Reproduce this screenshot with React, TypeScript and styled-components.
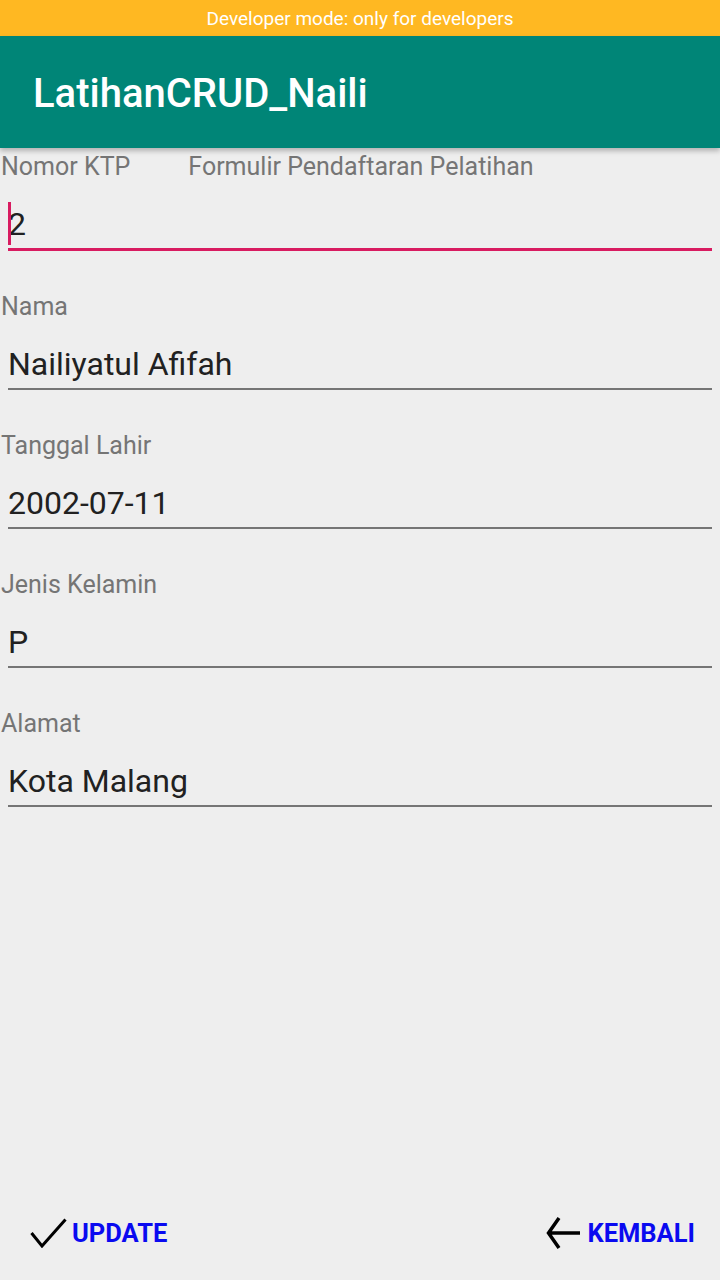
import React from "react";
import styled, { createGlobalStyle } from "styled-components";

const Global = createGlobalStyle`
  html, body { margin: 0; padding: 0; background: #eeeeee; }
  body { font-family: Roboto, "Noto Sans", sans-serif; }
  * { box-sizing: border-box; }
`;

const Screen = styled.div`
  width: 720px;
  height: 1280px;
  display: flex;
  flex-direction: column;
  background: #eeeeee;
  overflow: hidden;
`;

const StatusBar = styled.div`
  height: 36px;
  background: #ffb822;
  color: #ffffff;
  font-size: 19px;
  display: flex;
  align-items: center;
  justify-content: center;
`;

const AppBar = styled.header`
  height: 112px;
  background: #008577;
  color: #ffffff;
  display: flex;
  align-items: center;
  padding-left: 33px;
  padding-top: 2px;
  font-size: 40px;
  font-weight: 500;
  box-shadow: 0 3px 5px rgba(0, 0, 0, 0.25);
  position: relative;
  z-index: 1;
`;

const Form = styled.main`
  display: flex;
  flex-direction: column;
  gap: 37px;
`;

const Field = styled.div`
  display: flex;
  flex-direction: column;
`;

const LabelRow = styled.div`
  height: 36px;
  display: flex;
  align-items: center;
  gap: 58px;
  padding-left: 1px;
`;

const Label = styled.span`
  font-size: 25px;
  color: #757575;
`;

const InputBox = styled.div<{ $focused?: boolean }>`
  margin: 21px 8px 0;
  height: ${(p) => (p.$focused ? "46px" : "45px")};
  border-bottom: ${(p) => (p.$focused ? "3px solid #d81b60" : "2px solid #757575")};
  display: flex;
  align-items: flex-start;
  font-size: 32px;
  line-height: 38px;
  color: #212121;
  position: relative;
`;

const Cursor = styled.span`
  position: absolute;
  left: 0;
  top: -3px;
  width: 3px;
  height: 43px;
  background: #d81b60;
`;

const Footer = styled.footer`
  margin-top: auto;
  height: 94px;
  display: flex;
  justify-content: space-between;
  align-items: center;
  padding: 0 25px 0 30px;
`;

const ActionButton = styled.button<{ $gap: number }>`
  display: flex;
  align-items: center;
  gap: ${(p) => p.$gap}px;
  background: none;
  border: none;
  padding: 0;
  font-family: Roboto, sans-serif;
  font-weight: 700;
  font-size: 25.5px;
  color: #0a0af0;
`;

const fields = [
  { label: "Nama", value: "Nailiyatul Afifah" },
  { label: "Tanggal Lahir", value: "2002-07-11" },
  { label: "Jenis Kelamin", value: "P" },
  { label: "Alamat", value: "Kota Malang" },
];

export default function App() {
  return (
    <>
      <Global />
      <Screen>
        <StatusBar>Developer mode: only for developers</StatusBar>
        <AppBar>LatihanCRUD_Naili</AppBar>
        <Form>
          <Field>
            <LabelRow>
              <Label>Nomor KTP</Label>
              <Label>Formulir Pendaftaran Pelatihan</Label>
            </LabelRow>
            <InputBox $focused>
              <Cursor />2
            </InputBox>
          </Field>
          {fields.map((f) => (
            <Field key={f.label}>
              <LabelRow>
                <Label>{f.label}</Label>
              </LabelRow>
              <InputBox>{f.value}</InputBox>
            </Field>
          ))}
        </Form>
        <Footer>
          <ActionButton $gap={5}>
            <svg width="37" height="30" viewBox="0 0 37 30">
              <path d="M1.5 15 L12 28 L35.5 1.5" fill="none" stroke="#000" strokeWidth="3" />
            </svg>
            UPDATE
          </ActionButton>
          <ActionButton $gap={6}>
            <svg width="35" height="32" viewBox="0 0 35 32">
              <path d="M13 1 L2.5 16 L13 31 M2.5 16 H34" fill="none" stroke="#000" strokeWidth="3.5" />
            </svg>
            KEMBALI
          </ActionButton>
        </Footer>
      </Screen>
    </>
  );
}
